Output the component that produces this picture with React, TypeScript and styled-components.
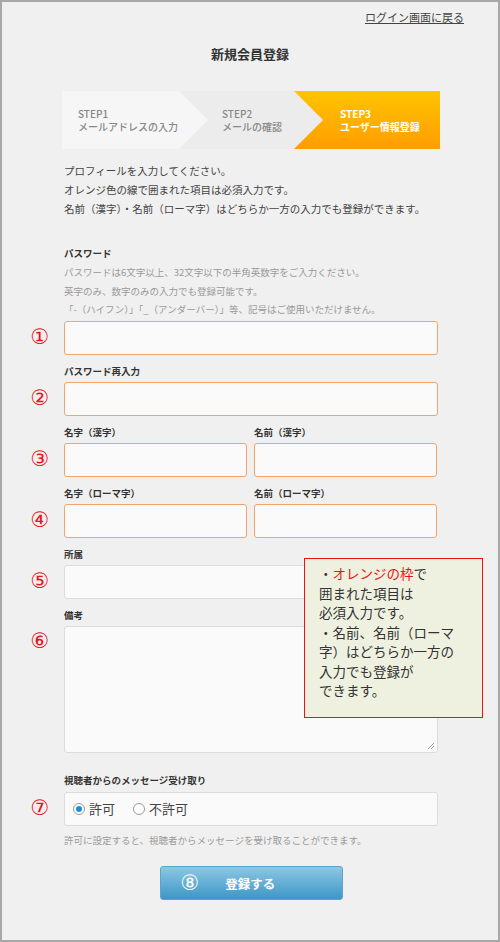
import React from "react";
import styled, { createGlobalStyle } from "styled-components";

const G = createGlobalStyle`
  html,body{margin:0;padding:0;}
  body{font-family:"Noto Sans CJK JP","Noto Sans",sans-serif;color:#333;}
`;
const Frame = styled.div`
  width:500px;height:942px;box-sizing:border-box;border:2px solid #a8a8a8;background:#f0f0f0;position:relative;overflow:hidden;
`;
const TopLink = styled.a`
  position:absolute;right:34px;top:7px;font-size:11px;color:#444;text-decoration:underline;
`;
const Title = styled.h1`
  margin:0;padding-top:42px;text-align:center;font-size:13px;font-weight:700;color:#333;line-height:20px;
`;
const Steps = styled.div`
  margin:27px 58px 0 60px;display:flex;height:58px;
`;
const Step = styled.div<{ $bg: string; $w?: number; $pl: number; $last?: boolean; $color: string; $z: number }>`
  position:relative;${p => (p.$w ? `width:${p.$w}px;flex:none;` : "flex:1;")}background:${p => p.$bg};color:${p => p.$color};
  font-size:10px;line-height:13px;font-weight:${p => (p.$last ? 700 : 500)};white-space:nowrap;
  display:flex;flex-direction:column;justify-content:center;padding-left:${p => p.$pl}px;box-sizing:border-box;
  z-index:${p => p.$z};
  ${p => !p.$last && `&::after{content:"";position:absolute;right:-29px;top:0;border-top:29px solid transparent;border-bottom:29px solid transparent;border-left:29px solid ${p.$bg};}`}
`;
const Intro = styled.div`
  margin:12px 0 0 62px;font-size:10.5px;line-height:19px;color:#444;
`;
const Section = styled.div<{ $mt: number }>`
  margin-top:${p => p.$mt}px;
`;
const Label = styled.div`
  margin-left:62px;font-size:9.5px;font-weight:700;line-height:14px;color:#333;
`;
const Help = styled.div`
  margin-left:62px;font-size:9.5px;line-height:18.5px;color:#999;
`;
const Row = styled.div`
  display:grid;grid-template-columns:62px 1fr;align-items:center;margin-right:60px;
`;
const Num = styled.span`
  color:#e8141b;font-size:21px;line-height:1;text-align:center;padding-left:22px;padding-right:8px;font-family:"DejaVu Sans",sans-serif;
`;
const Input = styled.div<{ $req?: boolean; $h?: number }>`
  height:${p => p.$h ?? 34}px;box-sizing:border-box;background:#fafafa;border-radius:3px;
  border:1px solid ${p => (p.$req ? "#f5a468" : "#dcdcdc")};position:relative;
`;
const Pair = styled.div`
  display:grid;grid-template-columns:183px 183px;column-gap:7px;
`;
const PairLabels = styled.div`
  margin-left:62px;display:grid;grid-template-columns:183px 183px;column-gap:7px;font-size:9.5px;font-weight:700;line-height:14px;
`;
const Grip = styled.svg`position:absolute;right:2px;bottom:2px;`;
const Radios = styled.div`
  height:34px;box-sizing:border-box;background:#fafafa;border:1px solid #dcdcdc;border-radius:3px;display:flex;align-items:center;padding-left:8px;gap:18px;font-size:13px;color:#444;
`;
const Radio = styled.span`display:flex;align-items:center;gap:4px;`;
const Dot = styled.span<{ $on?: boolean }>`
  width:12px;height:12px;border-radius:50%;border:1px solid #999;box-sizing:border-box;background:#fff;display:flex;align-items:center;justify-content:center;
  &::after{content:"";width:6px;height:6px;border-radius:50%;background:${p => (p.$on ? "#1a8fe0" : "transparent")};}
`;
const BtnWrap = styled.div`display:flex;justify-content:center;margin-top:17px;margin-left:2px;`;
const Button = styled.div`
  width:183px;height:34px;box-sizing:border-box;border-radius:3px;border:1px solid #5aa5cc;
  background:linear-gradient(#8ec7e3,#3d97c7);color:#fff;display:flex;align-items:center;font-weight:700;font-size:12.5px;
`;
const BNum = styled.span`font-family:"DejaVu Sans",sans-serif;font-size:21px;font-weight:400;margin-left:20px;margin-right:26px;`;
const Callout = styled.div`
  position:absolute;left:302px;top:556px;width:179px;height:160px;box-sizing:border-box;border:1.5px solid #ee1111;background:#eff1e0;
  padding:5px 4px 0 14px;font-size:13.5px;line-height:19.5px;color:#333;white-space:nowrap;
`;
const Red = styled.span`color:#ee1111;`;

export default function App() {
  return (
    <Frame>
      <G />
      <TopLink>ログイン画面に戻る</TopLink>
      <Title>新規会員登録</Title>
      <Steps>
        <Step $w={117} $pl={16} $bg="#f6f6f6" $color="#888" $z={3}><span>STEP1</span><span>メールアドレスの入力</span></Step>
        <Step $w={115} $pl={43} $bg="#ececec" $color="#888" $z={2}><span>STEP2</span><span>メールの確認</span></Step>
        <Step $last $pl={46} $bg="linear-gradient(#ffc400,#ff9d00)" $color="#fff" $z={1}><span>STEP3</span><span>ユーザー情報登録</span></Step>
      </Steps>
      <Intro>
        プロフィールを入力してください。<br />
        オレンジ色の線で囲まれた項目は必須入力です。<br />
        名前（漢字）・名前（ローマ字）はどちらか一方の入力でも登録ができます。
      </Intro>
      <Section $mt={28}>
        <Label>パスワード</Label>
        <Help style={{ marginTop: 3 }}>パスワードは6文字以上、32文字以下の半角英数字をご入力ください。<br />英字のみ、数字のみの入力でも登録可能です。<br />「-（ハイフン）」「_（アンダーバー）」等、記号はご使用いただけません。</Help>
        <Row style={{ marginTop: 2 }}><Num>①</Num><Input $req /></Row>
      </Section>
      <Section $mt={9}>
        <Label>パスワード再入力</Label>
        <Row style={{ marginTop: 4 }}><Num>②</Num><Input $req /></Row>
      </Section>
      <Section $mt={9}>
        <PairLabels><span>名字（漢字）</span><span>名前（漢字）</span></PairLabels>
        <Row style={{ marginTop: 4 }}><Num>③</Num><Pair><Input $req /><Input $req /></Pair></Row>
      </Section>
      <Section $mt={9}>
        <PairLabels><span>名字（ローマ字）</span><span>名前（ローマ字）</span></PairLabels>
        <Row style={{ marginTop: 4 }}><Num>④</Num><Pair><Input $req /><Input $req /></Pair></Row>
      </Section>
      <Section $mt={9}>
        <Label>所属</Label>
        <Row style={{ marginTop: 4 }}><Num>⑤</Num><Input /></Row>
      </Section>
      <Section $mt={9}>
        <Label>備考</Label>
        <Row style={{ marginTop: 4, alignItems: "start" }}>
          <Num style={{ paddingTop: 5 }}>⑥</Num>
          <Input $h={127}>
            <Grip width="8" height="8" viewBox="0 0 8 8"><path d="M7 1L1 7M7 4L4 7" stroke="#999" strokeWidth="1" /></Grip>
          </Input>
        </Row>
      </Section>
      <Section $mt={20}>
        <Label>視聴者からのメッセージ受け取り</Label>
        <Row style={{ marginTop: 5 }}>
          <Num>⑦</Num>
          <Radios>
            <Radio><Dot $on />許可</Radio>
            <Radio><Dot />不許可</Radio>
          </Radios>
        </Row>
        <Help style={{ marginTop: 5 }}>許可に設定すると、視聴者からメッセージを受け取ることができます。</Help>
      </Section>
      <BtnWrap><Button><BNum>⑧</BNum>登録する</Button></BtnWrap>
      <Callout>
        ・<Red>オレンジの枠</Red>で<br />囲まれた項目は<br />必須入力です。<br />・名前、名前（ローマ<br />字）はどちらか一方の<br />入力でも登録が<br />できます。
      </Callout>
    </Frame>
  );
}
